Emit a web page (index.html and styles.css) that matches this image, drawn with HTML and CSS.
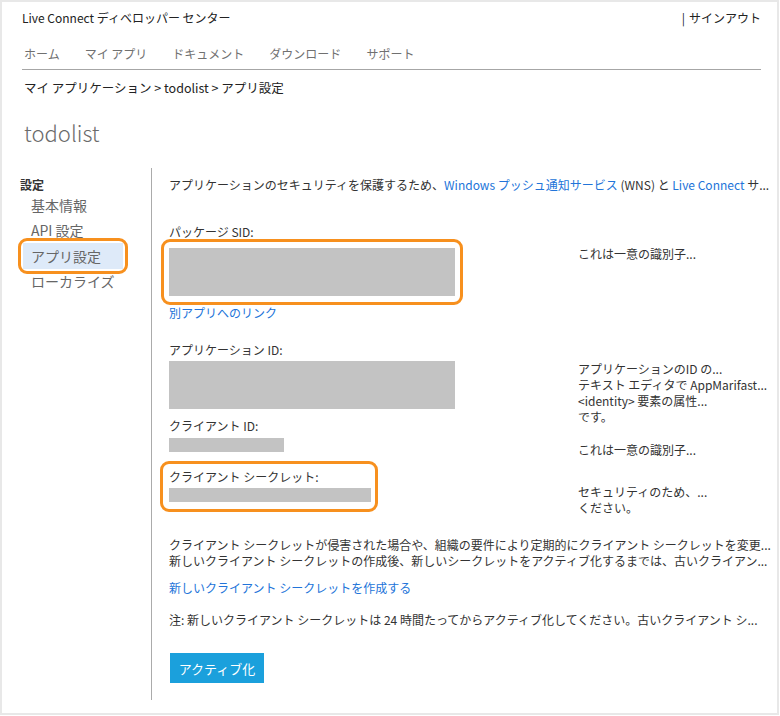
FILE: index.html
```html
<!DOCTYPE html>
<html lang="ja">
<head>
<meta charset="utf-8">
<title>アプリ設定 - Live Connect ディベロッパー センター</title>
<link rel="stylesheet" href="styles.css">
</head>
<body>
<div class="frame">
  <header class="topbar">
    <div class="brand">Live Connect ディベロッパー センター</div>
    <div class="account"><span class="sep">|</span>サインアウト</div>
  </header>
  <nav class="mainnav">
    <a class="nav-link">ホーム</a>
    <a class="nav-link">マイ アプリ</a>
    <a class="nav-link">ドキュメント</a>
    <a class="nav-link">ダウンロード</a>
    <a class="nav-link">サポート</a>
  </nav>
  <div class="crumbs">マイ アプリケーション &gt; todolist &gt; アプリ設定</div>
  <h1 class="apptitle">todolist</h1>
  <div class="layout">
    <aside class="sidenav">
      <div class="side-head">設定</div>
      <a class="side-item">基本情報</a>
      <a class="side-item">API 設定</a>
      <div class="ring ring-side"><a class="side-item active">アプリ設定</a></div>
      <a class="side-item">ローカライズ</a>
    </aside>
    <main class="content">
      <p class="intro">アプリケーションのセキュリティを保護するため、<a class="link">Windows プッシュ通知サービス</a> (WNS) と <a class="link">Live Connect</a> サ...</p>
      <div class="fields">
        <div class="field-col">
          <div class="label">パッケージ SID:</div>
          <div class="ring ring-sid"><div class="mask mask-lg"></div></div>
          <a class="link block-link">別アプリへのリンク</a>
          <div class="label label-app">アプリケーション ID:</div>
          <div class="mask mask-lg mask-app"></div>
          <div class="label label-client">クライアント ID:</div>
          <div class="mask mask-sm mask-client"></div>
          <div class="ring ring-secret">
            <div class="label">クライアント シークレット:</div>
            <div class="mask mask-sm mask-secret"></div>
          </div>
        </div>
        <div class="desc-col">
          <p class="desc desc-sid">これは一意の識別子...</p>
          <p class="desc desc-app">アプリケーションのID の...<br>テキスト エディタで AppMarifast...<br>&lt;identity&gt; 要素の属性...<br>です。</p>
          <p class="desc desc-client">これは一意の識別子...</p>
          <p class="desc desc-secret">セキュリティのため、...<br>ください。</p>
        </div>
      </div>
      <p class="para">クライアント シークレットが侵害された場合や、組織の要件により定期的にクライアント シークレットを変更...<br>新しいクライアント シークレットの作成後、新しいシークレットをアクティブ化するまでは、古いクライアン...</p>
      <a class="link block-link create-link">新しいクライアント シークレットを作成する</a>
      <p class="note">注: 新しいクライアント シークレットは 24 時間たってからアクティブ化してください。古いクライアント シ...</p>
      <button class="activate" type="button">アクティブ化</button>
    </main>
  </div>
</div>
</body>
</html>
```
FILE: styles.css
```css
html, body {
  margin: 0;
  padding: 0;
  background: #ffffff;
}
body {
  font-family: "Noto Sans CJK JP", "Noto Sans", sans-serif;
  color: #333333;
  font-size: 12px;
  line-height: 16px;
}
p { margin: 0; }
a { text-decoration: none; }

.frame {
  box-sizing: border-box;
  width: 779px;
  height: 715px;
  border: 2px solid #e8e8e8;
  padding: 0 0 0 20px;
  overflow: hidden;
}

/* top bar */
.topbar {
  display: flex;
  justify-content: space-between;
  margin: 8px 16px 0 0;
  height: 16px;
  font-size: 12px;
  color: #222;
}
.account .sep {
  margin-right: 4px;
}

/* main nav */
.mainnav {
  display: flex;
  gap: 25px;
  margin: 20px 16px 0 0;
  padding: 0 0 7px 2px;
  border-bottom: 1px solid #a6a6a6;
  font-size: 12px;
  line-height: 16px;
}
.nav-link {
  color: #707070;
}

.crumbs {
  margin-top: 10px;
  padding-left: 2px;
  font-size: 12.5px;
  color: #222;
}

.apptitle {
  margin: 22px 0 0 2px;
  font-size: 22px;
  line-height: 28px;
  font-weight: 300;
  color: #6b6b6b;
}

/* layout */
.layout {
  display: flex;
  margin: 22px 0 0 -2px;
}
.sidenav {
  width: 131px;
  flex: none;
  padding-top: 9px;
}
.side-head {
  font-size: 12px;
  font-weight: 700;
  color: #333;
  line-height: 16px;
}
.side-item {
  display: block;
  box-sizing: border-box;
  width: 100px;
  height: 25px;
  margin-left: 3px;
  padding-left: 8px;
  font-size: 14px;
  line-height: 25px;
  color: #666;
}
.side-item.active {
  margin-left: 0;
  height: 26px;
  line-height: 27px;
  background: #deeaf9;
}

.ring {
  border: 3px solid #f7901e;
  border-radius: 9px;
}
.ring-side {
  width: 110px;
  box-sizing: border-box;
  margin: -5px 0 -5px -2px;
  padding: 2px;
}

.content {
  flex: 1;
  border-left: 1px solid #ababab;
  padding: 9px 0 17px 17px;
}
.link { color: #2274d9; }
.block-link { display: block; }

.intro {
  white-space: nowrap;
}

.fields {
  display: flex;
  margin-top: 31px;
}
.field-col {
  width: 409px;
  flex: none;
}
.label {
  line-height: 16px;
}
.mask {
  background: #c3c3c3;
}
.mask-lg {
  width: 286px;
  height: 48px;
}
.mask-sm {
  height: 14px;
}
.ring-sid {
  width: 302px;
  box-sizing: border-box;
  margin: -1px 0 0 -8px;
  padding: 6px 5px 6px 5px;
}
.label-app { margin-top: 21px; }
.mask-app { margin-top: 3px; }
.label-client { margin-top: 9px; }
.mask-client { margin-top: 4px; width: 115px; }
.ring-secret {
  width: 218px;
  box-sizing: border-box;
  margin: 9px 0 0 -9px;
  padding: 5px 7px 7px 6px;
}
.mask-secret { margin-top: 3px; width: 202px; }

.desc-col {
  flex: 1;
}
.desc-sid { margin-top: 22px; }
.desc-app { margin-top: 99px; }
.desc-client { margin-top: 17px; }
.desc-secret { margin-top: 26px; }

.para {
  margin-top: 21px;
  white-space: nowrap;
}
.create-link { margin-top: 11px; }
.note {
  margin-top: 16px;
  white-space: nowrap;
}
.activate {
  display: block;
  margin: 25px 0 0 1px;
  width: 94px;
  height: 30px;
  border: none;
  background: #1ba0dc;
  color: #ffffff;
  font-family: "Noto Sans CJK JP", "Noto Sans", sans-serif;
  font-size: 13px;
  padding: 0;
}
```
